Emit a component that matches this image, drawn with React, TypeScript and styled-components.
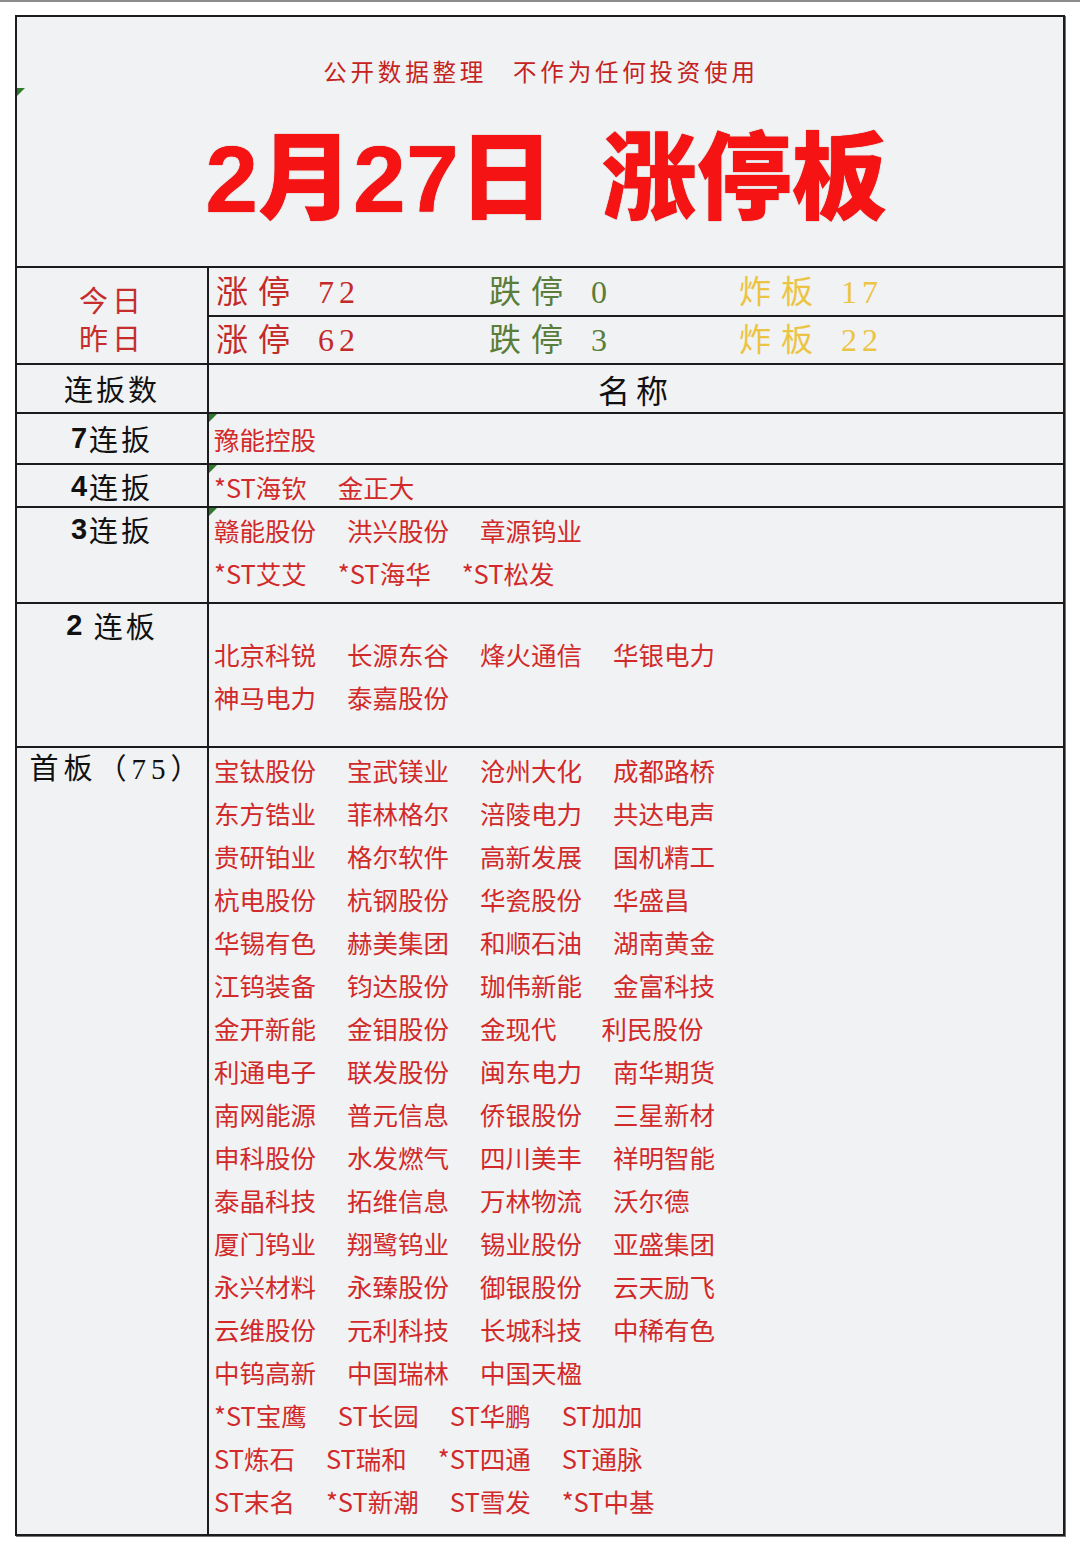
import React from 'react';
import styled, { createGlobalStyle } from 'styled-components';

const CJK = '"Noto Sans CJK SC", "Noto Sans", sans-serif';
const SERIF = '"Liberation Serif", "Noto Sans CJK SC", serif';

const GlobalStyle = createGlobalStyle`
  *, *::before, *::after {
    box-sizing: border-box;
  }
  body {
    margin: 0;
    background: #fff;
    font-family: ${CJK};
  }
`;

const Page = styled.div`
  border-top: 2px solid #8c8c8c;
  padding: 13px 15px 7px 15px;
  width: 1080px;
`;

const Sheet = styled.div`
  border: 2px solid #1c1c1c;
  background: #f1f2f3;
  box-shadow: 1px 1px 0 #777;
`;

const Marker = styled.span<{ $top?: number }>`
  position: absolute;
  left: 0;
  top: ${p => p.$top ?? 0}px;
  width: 0;
  height: 0;
  border-top: 8px solid #2f7a2f;
  border-right: 8px solid transparent;
`;

const TitleBlock = styled.div`
  position: relative;
  height: 249px;
  display: flex;
  flex-direction: column;
  align-items: center;
`;

const Subtitle = styled.div`
  margin-top: 39px;
  padding-left: 2px;
  font-size: 23.5px;
  line-height: 30px;
  letter-spacing: 3.8px;
  color: #c52222;
  display: flex;
  gap: 26px;
`;

const Headline = styled.div`
  margin-top: 38px;
  padding-left: 12px;
  font-family: "Liberation Sans", ${CJK};
  font-weight: 900;
  font-size: 95px;
  line-height: 110px;
  color: #f51313;
  text-shadow: 0 0 1px #b00;
  display: flex;
  gap: 48px;
  white-space: nowrap;
`;

const Row = styled.div<{ $h: number }>`
  display: grid;
  grid-template-columns: 192px 1fr;
  height: ${p => p.$h}px;
  border-top: 2px solid #1c1c1c;
`;

const Label = styled.div<{ $center?: boolean }>`
  border-right: 2px solid #1c1c1c;
  display: flex;
  justify-content: center;
  align-items: ${p => (p.$center ? 'center' : 'flex-start')};
  font-size: 29px;
  line-height: 43px;
  letter-spacing: 3px;
  color: #111;
  white-space: nowrap;
`;

const Num = styled.b`
  font-family: "Liberation Sans", sans-serif;
  font-weight: 700;
  letter-spacing: 0;
  margin-right: 2px;
`;

const SerifLabel = styled(Label)`
  font-family: ${SERIF};
  letter-spacing: 5px;
  padding-left: 10px;
`;

const DayCell = styled(Label)`
  flex-direction: column;
  align-items: center;
  justify-content: center;
  color: #c62e2e;
  font-size: 29px;
  line-height: 38px;
  letter-spacing: 4px;
  padding-top: 4px;
`;

const StatRows = styled.div`
  display: grid;
  grid-template-rows: 47px 2px 46px;
`;

const StatLine = styled.div`
  display: grid;
  grid-template-columns: 273px 250px 1fr;
  align-items: center;
  padding-left: 7px;
  font-family: ${SERIF};
  font-size: 32px;
  line-height: 46px;
`;

const Divider = styled.div`
  background: #1c1c1c;
`;

const Stat = styled.div<{ $color: string }>`
  color: ${p => p.$color};
  white-space: nowrap;
  display: flex;
  gap: 18px;
`;

const StatName = styled.span`
  letter-spacing: 10px;
`;

const StatValue = styled.span`
  letter-spacing: 5px;
`;

const HeaderName = styled.div`
  display: flex;
  justify-content: center;
  align-items: center;
  font-size: 32px;
  letter-spacing: 6px;
  color: #111;
`;

const Names = styled.div<{ $center?: boolean; $pad?: number }>`
  position: relative;
  display: flex;
  flex-direction: column;
  justify-content: ${p => (p.$center ? 'center' : 'flex-start')};
  padding: ${p => p.$pad ?? 0}px 0 0 5px;
`;

const NameLine = styled.div`
  display: flex;
  gap: 31px;
  font-size: 25.5px;
  line-height: 43px;
  color: #d22a2a;
  white-space: nowrap;
`;

const Name = styled.span<{ $wide?: boolean }>`
  margin-right: ${p => (p.$wide ? 14 : 0)}px;
`;

const firstBoard: string[][] = [
  ['宝钛股份', '宝武镁业', '沧州大化', '成都路桥'],
  ['东方锆业', '菲林格尔', '涪陵电力', '共达电声'],
  ['贵研铂业', '格尔软件', '高新发展', '国机精工'],
  ['杭电股份', '杭钢股份', '华瓷股份', '华盛昌'],
  ['华锡有色', '赫美集团', '和顺石油', '湖南黄金'],
  ['江钨装备', '钧达股份', '珈伟新能', '金富科技'],
  ['金开新能', '金钼股份', '金现代', '利民股份'],
  ['利通电子', '联发股份', '闽东电力', '南华期货'],
  ['南网能源', '普元信息', '侨银股份', '三星新材'],
  ['申科股份', '水发燃气', '四川美丰', '祥明智能'],
  ['泰晶科技', '拓维信息', '万林物流', '沃尔德'],
  ['厦门钨业', '翔鹭钨业', '锡业股份', '亚盛集团'],
  ['永兴材料', '永臻股份', '御银股份', '云天励飞'],
  ['云维股份', '元利科技', '长城科技', '中稀有色'],
  ['中钨高新', '中国瑞林', '中国天楹'],
  ['*ST宝鹰', 'ST长园', 'ST华鹏', 'ST加加'],
  ['ST炼石', 'ST瑞和', '*ST四通', 'ST通脉'],
  ['ST末名', '*ST新潮', 'ST雪发', '*ST中基'],
];

const NameList = ({ lines }: { lines: string[][] }) => (
  <>
    {lines.map((line, i) => (
      <NameLine key={i}>
        {line.map(n => (
          <Name key={n} $wide={n === '金现代'}>
            {n}
          </Name>
        ))}
      </NameLine>
    ))}
  </>
);

const App = () => {
  return (
    <Page>
      <GlobalStyle />
      <Sheet>
        <TitleBlock>
          <Marker $top={71} />
          <Subtitle>
            <span>公开数据整理</span>
            <span>不作为任何投资使用</span>
          </Subtitle>
          <Headline>
            <span>2月27日</span>
            <span>涨停板</span>
          </Headline>
        </TitleBlock>

        <Row $h={97}>
          <DayCell>
            <span>今日</span>
            <span>昨日</span>
          </DayCell>
          <StatRows>
            <StatLine>
              <Stat $color="#c42a2a"><StatName>涨停</StatName><StatValue>72</StatValue></Stat>
              <Stat $color="#5a7d3a"><StatName>跌停</StatName><StatValue>0</StatValue></Stat>
              <Stat $color="#ecc444"><StatName>炸板</StatName><StatValue>17</StatValue></Stat>
            </StatLine>
            <Divider />
            <StatLine>
              <Stat $color="#c42a2a"><StatName>涨停</StatName><StatValue>62</StatValue></Stat>
              <Stat $color="#5a7d3a"><StatName>跌停</StatName><StatValue>3</StatValue></Stat>
              <Stat $color="#ecc444"><StatName>炸板</StatName><StatValue>22</StatValue></Stat>
            </StatLine>
          </StatRows>
        </Row>

        <Row $h={49}>
          <Label $center>连扳数</Label>
          <HeaderName>名称</HeaderName>
        </Row>

        <Row $h={51}>
          <Label $center><Num>7</Num>连扳</Label>
          <Names $center>
            <Marker />
            <NameList lines={[['豫能控股']]} />
          </Names>
        </Row>

        <Row $h={43}>
          <Label $center><Num>4</Num>连扳</Label>
          <Names $center>
            <Marker />
            <NameList lines={[['*ST海钦', '金正大']]} />
          </Names>
        </Row>

        <Row $h={96}>
          <Label><Num>3</Num>连扳</Label>
          <Names>
            <Marker />
            <NameList
              lines={[
                ['赣能股份', '洪兴股份', '章源钨业'],
                ['*ST艾艾', '*ST海华', '*ST松发'],
              ]}
            />
          </Names>
        </Row>

        <Row $h={144}>
          <Label><Num>2</Num>&nbsp;连板</Label>
          <Names $pad={28}>
            <NameList
              lines={[
                ['北京科锐', '长源东谷', '烽火通信', '华银电力'],
                ['神马电力', '泰嘉股份'],
              ]}
            />
          </Names>
        </Row>

        <Row $h={788}>
          <SerifLabel>首板（75）</SerifLabel>
          <Names>
            <NameList lines={firstBoard} />
          </Names>
        </Row>
      </Sheet>
    </Page>
  );
};

export default App;
